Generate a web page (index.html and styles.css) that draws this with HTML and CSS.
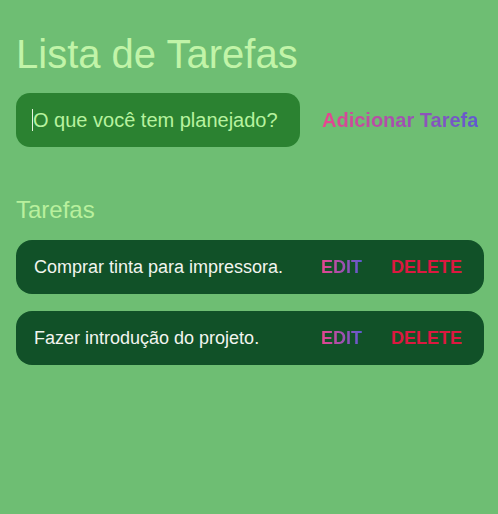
FILE: index.html
```html
<!DOCTYPE html>
<html lang="pt">
<head>
<meta charset="utf-8">
<link rel="stylesheet" href="styles.css">
</head>
<body>
<main class="app">
  <h1 class="title">Lista de Tarefas</h1>
  <form class="new-task">
    <div class="input"><span class="caret"></span>O que você tem planejado?</div>
    <button type="button" class="add">Adicionar Tarefa</button>
  </form>
  <section class="tasks">
    <h2 class="tasks-title">Tarefas</h2>
    <div class="list">
      <div class="task">
        <span class="task-text">Comprar tinta para impressora.</span>
        <div class="actions">
          <button type="button" class="edit">EDIT</button>
          <button type="button" class="delete">DELETE</button>
        </div>
      </div>
      <div class="task">
        <span class="task-text">Fazer introdução do projeto.</span>
        <div class="actions">
          <button type="button" class="edit">EDIT</button>
          <button type="button" class="delete">DELETE</button>
        </div>
      </div>
    </div>
  </section>
</main>
</body>
</html>
```
FILE: styles.css
```css
html, body {
  margin: 0;
  padding: 0;
  background: #6ebe73;
  font-family: "Liberation Sans", Arial, sans-serif;
}
.app {
  padding: 28px 14px 16px 16px;
}
.title {
  margin: 0;
  font-size: 40px;
  font-weight: 400;
  color: #c1f4a8;
  line-height: 52px;
}
.new-task {
  margin-top: 13px;
  display: flex;
  align-items: center;
  gap: 22px;
}
.input {
  width: 284px;
  height: 54px;
  box-sizing: border-box;
  border-radius: 14px;
  background: #2b8231;
  color: #b7f29f;
  font-size: 20px;
  display: flex;
  align-items: center;
  padding-left: 16px;
}
.caret {
  display: inline-block;
  width: 1px;
  height: 22px;
  background: #e8f5e0;
}
.add {
  background: linear-gradient(90deg, #e8468e, #5f5ad0);
  -webkit-background-clip: text;
  background-clip: text;
  color: transparent;
  border: none;
  padding: 0;
  font-family: inherit;
  font-size: 20px;
  font-weight: 700;
}
.tasks {
  margin-top: 49px;
}
.tasks-title {
  margin: 0;
  font-size: 24px;
  font-weight: 400;
  color: #b8f09d;
  line-height: 28px;
}
.list {
  margin-top: 16px;
  display: flex;
  flex-direction: column;
  gap: 17px;
  width: 468px;
}
.task {
  height: 54px;
  border-radius: 16px;
  background: #115128;
  display: flex;
  align-items: center;
  justify-content: space-between;
  padding: 0 22px 0 18px;
}
.task-text {
  color: #f2f5ef;
  font-size: 18px;
}
.actions {
  display: flex;
  gap: 29px;
}
.actions button {
  border: none;
  background: none;
  padding: 0;
  font-family: inherit;
  font-size: 18px;
  font-weight: 700;
}
.actions .edit {
  background: linear-gradient(90deg, #e8468e, #5f5ad0);
  -webkit-background-clip: text;
  background-clip: text;
  color: transparent;
}
.delete {
  color: #dc1840;
}
```
